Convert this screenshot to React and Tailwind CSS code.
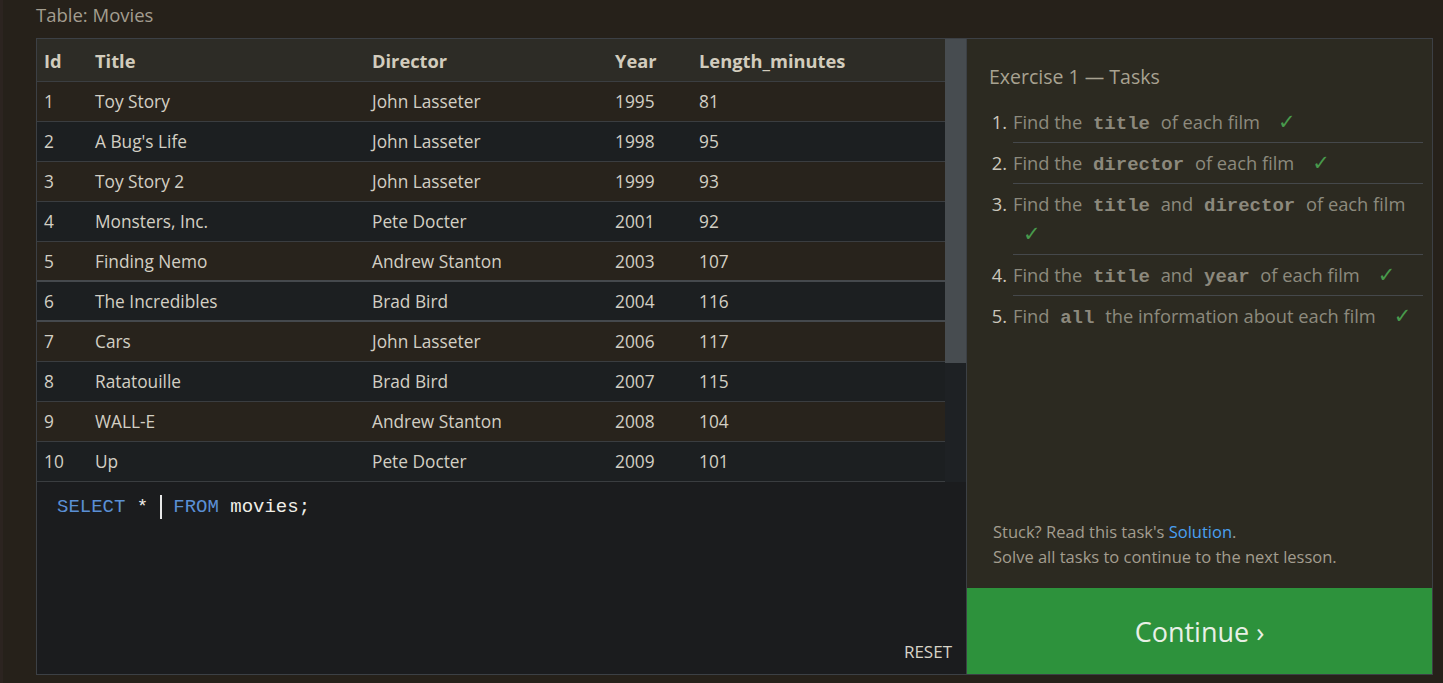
import React from "react";

const rows = [
  [1, "Toy Story", "John Lasseter", 1995, 81],
  [2, "A Bug's Life", "John Lasseter", 1998, 95],
  [3, "Toy Story 2", "John Lasseter", 1999, 93],
  [4, "Monsters, Inc.", "Pete Docter", 2001, 92],
  [5, "Finding Nemo", "Andrew Stanton", 2003, 107],
  [6, "The Incredibles", "Brad Bird", 2004, 116],
  [7, "Cars", "John Lasseter", 2006, 117],
  [8, "Ratatouille", "Brad Bird", 2007, 115],
  [9, "WALL-E", "Andrew Stanton", 2008, 104],
  [10, "Up", "Pete Docter", 2009, 101],
];

const gridCols = "grid grid-cols-[58px_277px_243px_84px_1fr]";

function Code({ children }) {
  return (
    <code className="font-['Liberation_Mono',monospace] font-bold text-[19px] leading-none text-[#8c897d] px-[6px]">
      {children}
    </code>
  );
}

function Check() {
  return <span className="text-[#489a4c] text-[21px] leading-none ml-[18px] font-['DejaVu_Sans',sans-serif]">✓</span>;
}

const tasks = [
  <>Find the <Code>title</Code> of each film<Check /></>,
  <>Find the <Code>director</Code> of each film<Check /></>,
  <>
    <span className="whitespace-nowrap">Find the <Code>title</Code> and <Code>director</Code> of each film</span>
    <span className="block pl-[10px]"><span className="text-[#489a4c] text-[21px] leading-none font-['DejaVu_Sans',sans-serif]">✓</span></span>
  </>,
  <>Find the <Code>title</Code> and <Code>year</Code> of each film<Check /></>,
  <>Find <Code>all</Code> the information about each film<Check /></>,
];

export default function App() {
  return (
    <div className="w-[1443px] h-[683px] bg-[#26211a] border-l-[3px] border-[#2c2420] pl-[33px] pr-[10px] font-['Open_Sans',sans-serif] overflow-hidden">
      <div className="h-[38px] pt-[3px] text-[18.5px] leading-[24px] text-[#a39d8f]">Table: Movies</div>
      <div className="flex border border-[#3c4045] h-[637px]">
        {/* Left panel */}
        <div className="w-[930px] flex flex-col border-r border-[#3c4045]">
          <div className="flex">
            <div className="w-[908px]">
              <div className={`${gridCols} h-[43px] pt-[2px] items-center bg-[#2d2c26] border-b border-[#3b3e41] text-[18.3px] font-bold text-[#d2ccbd]`}>
                <div className="pl-[7px]">Id</div>
                <div>Title</div>
                <div>Director</div>
                <div>Year</div>
                <div>Length_minutes</div>
              </div>
              {rows.map((r, i) => {
                const odd = i % 2 === 0;
                const thick = i === 4 || i === 5;
                return (
                  <div
                    key={r[0]}
                    className={`${gridCols} h-[40px] pt-[1px] items-center text-[17.3px] text-[#d3cfc4] ${odd ? "bg-[#28231c]" : "bg-[#1c1f21]"} ${thick ? "border-b-2 border-[#45494d]" : "border-b border-[#3a3d40]"}`}
                  >
                    <div className="pl-[7px]">{r[0]}</div>
                    <div>{r[1]}</div>
                    <div>{r[2]}</div>
                    <div>{r[3]}</div>
                    <div>{r[4]}</div>
                  </div>
                );
              })}
            </div>
            <div className="w-[21px] bg-[#1e2124] flex flex-col">
              <div className="h-[324px] bg-[#474c50]" />
            </div>
          </div>
          <div className="flex-1 bg-[#1b1c1e] flex flex-col pl-[20px] pr-[14px] pt-[12px] pb-[12px]">
            <div className="font-['Liberation_Mono',monospace] text-[19px] leading-[26px] text-[#f0eee8] flex items-center whitespace-pre">
              <span className="text-[#5a8fd4]">SELECT</span>
              <span> *</span>
              <span className="inline-block w-[2px] h-[24px] bg-[#e8e8e8] ml-[12px] mr-[11px]" />
              <span className="text-[#5a8fd4]">FROM</span>
              <span> movies;</span>
            </div>
            <div className="flex-1" />
            <div className="self-end text-[17px] leading-[20px] text-[#d7d3c8]">RESET</div>
          </div>
        </div>
        {/* Right panel */}
        <div className="flex-1 flex flex-col bg-[#2c2a21]">
          <div className="pl-[22px] pt-[25px] text-[19.5px] leading-[26px] text-[#a8a291]">Exercise 1 — Tasks</div>
          <ol className="mt-[12px] mr-[9px] text-[18.3px] text-[#8d8a7e]">
            {tasks.map((t, i) => (
              <li key={i} className="flex">
                <span className="w-[46px] text-right pr-[6px] text-[#cbc7bc] leading-[30px] pt-[5px]">{i + 1}.</span>
                <div className={`flex-1 py-[5px] leading-[30px] ${i < 4 ? "border-b border-[#45484b]" : ""}`}>{t}</div>
              </li>
            ))}
          </ol>
          <div className="flex-1" />
          <div className="pl-[26px] pb-[19px] text-[16.5px] leading-[25px] text-[#a39d8f]">
            <div>Stuck? Read this task's <span className="text-[#4aa0f0]">Solution</span>.</div>
            <div>Solve all tasks to continue to the next lesson.</div>
          </div>
          <div className="h-[86px] pt-[2px] bg-[#2d923c] flex items-center justify-center text-[27px] text-[#e8f0e6]">
            Continue ›
          </div>
        </div>
      </div>
    </div>
  );
}
